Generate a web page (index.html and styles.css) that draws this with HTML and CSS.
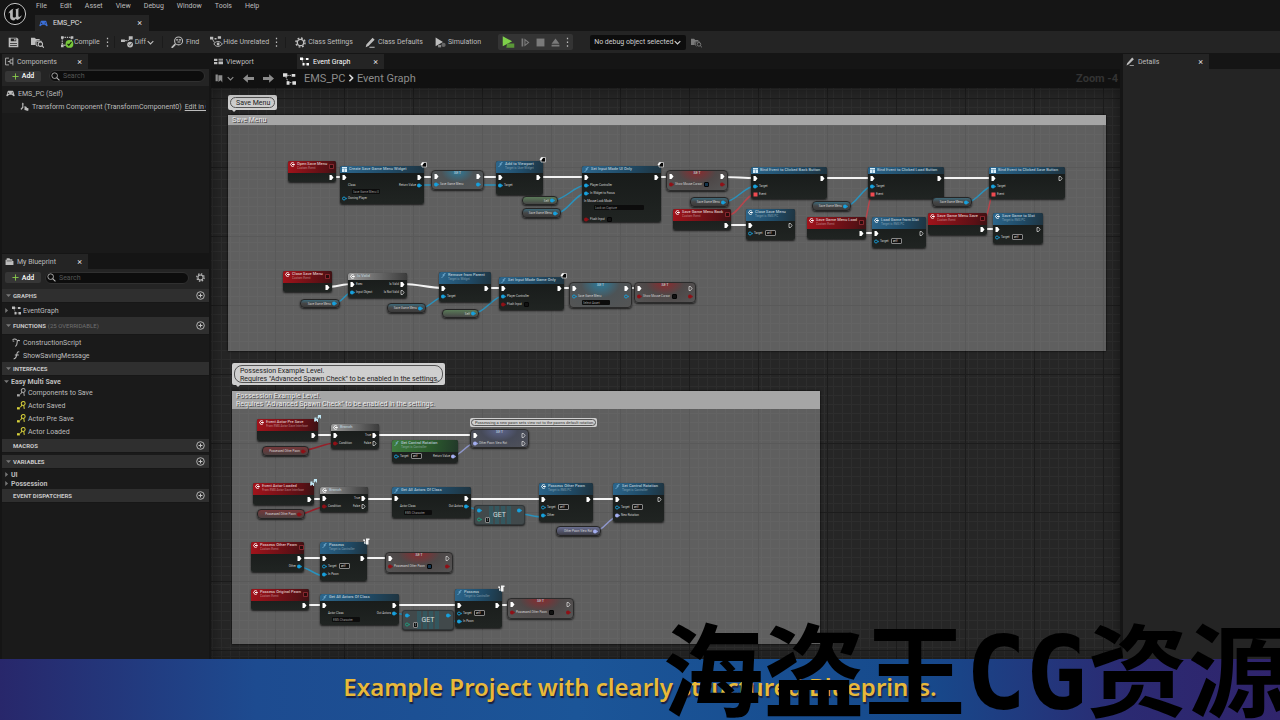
FILE: index.html
```
<!DOCTYPE html>
<html lang="en">
<head>
  <meta charset="UTF-8">
  <title>EMS_PC</title>
  <link rel="stylesheet" href="styles.css">
</head>
<body>

<svg class="sprite" aria-hidden="true">
  <symbol id="i-unreal" viewBox="0 0 24 24"><circle cx="12" cy="12" r="10.6" fill="#0c0c0c" stroke="#c4c4c4" stroke-width="1"/><path fill="#b4b4b4" d="M4.8 13.4C5.4 10 7.6 7.600 10.800 6.500 10 7.300 9.800 7.700 9.800 8.500v6c0 .8.7 1.100 1.300 1.100.7 0 1.300-.4 1.800-.9V8.600c0-.6-.2-.8-.8-1l4.300-1.700c-.8.7-1 1.200-1 2v6.200c0 .5.3.8.7.8.8 0 2-.9 2.900-1.900-.9 2.600-2.600 4.300-4.800 5.100l-1.300-1.300-1.800 1.600c-2.500-.1-4-1.500-4-3.500v-3.300c0-.5-.2-.8-.7-.8-.7 0-1.200.8-1.600 2.600z"/></symbol>
  <symbol id="i-pad" viewBox="0 0 16 12"><path fill="currentColor" fill-rule="evenodd" d="M4 1h8l1 1 2.500 8.500-2 .5-3-3h-5l-3 3-2-.5L3 2zM4 4v1H3v1h1v1h1V6h1V5H5V4zm7 0a1 1 0 1 0 .1 2A1 1 0 0 0 11 4z"/></symbol>
  <symbol id="i-save" viewBox="0 0 16 16"><path fill="currentColor" fill-rule="evenodd" d="M1 1h12l2 2v12H1zm3 1v4h8V2zm5 1h2v2H9zM3 9v1h10V9zm0 3v1h10v-1z"/></symbol>
  <symbol id="i-browse" viewBox="0 0 18 16"><path fill="currentColor" d="M0 2h5l2 2h5v2H8L6 8v4H0z"/><path fill="none" stroke="currentColor" stroke-width="1.500" d="M8 7h6v3M7 6v6l2 2"/><circle cx="13" cy="11" r="3" fill="#242424" stroke="currentColor" stroke-width="1.500"/><path stroke="currentColor" stroke-width="1.500" d="m15 13 3 3"/></symbol>
  <symbol id="i-compile" viewBox="0 0 20 18"><path fill="none" stroke="#c0c0c0" stroke-width="2" stroke-dasharray="2 1.500" d="M2 2h14v12H2z"/><path fill="#c0c0c0" d="M0 0h4v4H0zM15 0h4v4h-4zM0 13h4v4H0z"/><circle cx="13" cy="12" r="6" fill="#78c83c"/><path fill="none" stroke="#142008" stroke-width="1.800" d="m10 12 2 2 4-5"/></symbol>
  <symbol id="i-diff" viewBox="0 0 20 18"><path fill="currentColor" d="M0 5h6v4H0zM12 0h6v5h-6z"/><path stroke="currentColor" stroke-width="1.500" d="M6 7h4M11 7l3-3"/><circle cx="14" cy="13" r="4.500" fill="currentColor"/><path fill="none" stroke="#242424" stroke-width="1.300" d="m12 13 1.500 1.500L17 11"/></symbol>
  <symbol id="i-find" viewBox="0 0 18 16"><circle cx="10.500" cy="6.500" r="5.500" fill="none" stroke="currentColor" stroke-width="1.500"/><path stroke="currentColor" stroke-width="2.500" d="m6 11-5 5"/><path stroke="currentColor" stroke-width="1.500" d="M7 5h3M9 8h4M11 5h3"/></symbol>
  <symbol id="i-hide" viewBox="0 0 20 18"><path fill="currentColor" d="M0 1h5v4H0zM7 3h3v2H7zM12 0h5v4h-5z"/><path fill="none" stroke="currentColor" stroke-width="1.400" d="M4 5l3 5M6 12c3-5 9-5 13 0-4 5-10 5-13 0z"/><circle cx="12.500" cy="12" r="2.200" fill="currentColor"/></symbol>
  <symbol id="i-gear" viewBox="0 0 16 16"><circle cx="8" cy="8" r="4.600" fill="none" stroke="currentColor" stroke-width="1.800"/><circle cx="8" cy="8" r="6.600" fill="none" stroke="currentColor" stroke-width="2.200" stroke-dasharray="2.600 2.580"/></symbol>
  <symbol id="i-pencil" viewBox="0 0 16 16"><path fill="currentColor" d="m2 11 9-10 3 3-9 9-4 2zM7 14h7v1.500H6z"/></symbol>
  <symbol id="i-sim" viewBox="0 0 18 16"><path fill="currentColor" d="M1 0l12 7-12 7z"/><circle cx="14" cy="12" r="3.500" fill="#666"/><path fill="#888" d="M5 12h5v4H5z"/></symbol>
  <symbol id="i-play" viewBox="0 0 18 16"><path fill="#7ed04a" d="M1 0l13 7L1 14z"/><path fill="#5b9838" d="M7 10h10v6H6z"/></symbol>
  <symbol id="i-step" viewBox="0 0 16 16"><path fill="currentColor" d="M1 1h3v14H1zM6 1l9 7-9 7zM8 5v6l4-3z" fill-rule="evenodd"/></symbol>
  <symbol id="i-stop" viewBox="0 0 16 16"><path fill="currentColor" d="M1 1h14v14H1z"/></symbol>
  <symbol id="i-eject" viewBox="0 0 16 16"><path fill="currentColor" d="m8 1 7 9H1zM1 12h14v3H1z"/></symbol>
  <symbol id="i-dots" viewBox="0 0 4 16"><path fill="currentColor" d="M1 1h2v2.500H1zM1 7h2v2.500H1zM1 13h2v2.500H1z"/></symbol>
  <symbol id="i-down" viewBox="0 0 10 8"><path fill="none" stroke="currentColor" stroke-width="1.600" d="m1 2 4 4 4-4"/></symbol>
  <symbol id="i-comp" viewBox="0 0 16 16"><path fill="none" stroke="currentColor" stroke-width="1.500" d="M7 2H1v12h6M14 1v14M14 5H9v6h5M5 8h4"/></symbol>
  <symbol id="i-book" viewBox="0 0 16 14"><path fill="currentColor" d="M1 4h2V1h5l1 2h4v3h2v7H1z"/><path stroke="#242424" d="M3 6h9"/></symbol>
  <symbol id="i-search" viewBox="0 0 16 16"><circle cx="6.500" cy="6.500" r="5" fill="none" stroke="currentColor" stroke-width="1.500"/><path stroke="currentColor" stroke-width="1.800" d="m10 10 5 5"/></symbol>
  <symbol id="i-view" viewBox="0 0 16 12"><path fill="currentColor" d="M0 1h6v4H0zM8 1h8v2H8zM8 4h8v2H8zM0 7h6v4H0zM8 7h8v4H8z"/></symbol>
  <symbol id="i-graph" viewBox="0 0 18 16"><path fill="currentColor" d="M0 0h6v5H0zM12 1h5v4h-5zM5 11h4v5H5zM13 11h5v5h-5z"/><path fill="none" stroke="currentColor" stroke-width="1.200" stroke-dasharray="2 1" d="M6 3h6M4 5l3 7M9 13h4"/></symbol>
  <symbol id="i-flag" viewBox="0 0 16 16"><path fill="currentColor" d="M1 1h4v12H1zM6 2h7v13l-3-4-4 3z"/></symbol>
  <symbol id="i-left" viewBox="0 0 18 14"><path fill="currentColor" d="M0 7l8-7v4.500h10v5H8V14z"/></symbol>
  <symbol id="i-right" viewBox="0 0 18 14"><path fill="currentColor" d="m18 7-8-7v4.500H0v5h10V14z"/></symbol>
  <symbol id="i-axis" viewBox="0 0 16 16"><path fill="currentColor" d="M5 1l2 3H6v6l-4 4-1-2 3-3V4H3zM8 7l4 2v6l-4-1zM12 10l3 1v4l-3 1z"/></symbol>
  <symbol id="i-add" viewBox="0 0 16 16"><circle cx="8" cy="8" r="6.800" fill="none" stroke="currentColor" stroke-width="1.500"/><path stroke="currentColor" stroke-width="1.700" d="M8 4.500v7M4.500 8h7"/></symbol>
  <symbol id="i-plus" viewBox="0 0 16 16"><path stroke="#8ccf4d" stroke-width="2" d="M8 1v14M1 8h14"/></symbol>
  <symbol id="i-open" viewBox="0 0 8 8"><path fill="currentColor" d="M0 2h8L4 6.500z"/></symbol>
  <symbol id="i-shut" viewBox="0 0 8 8"><path fill="currentColor" d="M2 0v8l4.500-4z"/></symbol>
  <symbol id="i-func" viewBox="0 0 16 16"><path fill="none" stroke="currentColor" stroke-width="1.800" d="M13 2c-3-2-4 1-4.500 4S7 14 3 14M5 7h7"/></symbol>
  <symbol id="i-cons" viewBox="0 0 16 16"><path fill="none" stroke="currentColor" stroke-width="1.800" d="M14 5c-4-2-5 0-5 4s-1 5-3 6M1 3c3-2 5-2 8 1M1 5l3 1"/></symbol>
  <symbol id="i-iface" viewBox="0 0 16 16"><circle cx="11" cy="4.500" r="3.500" fill="none" stroke="currentColor" stroke-width="1.800"/><path stroke="currentColor" stroke-width="1.800" d="m9 7-3 4M12 8l1 6"/><path fill="currentColor" d="M0 11h5v4H0z"/></symbol>
  <symbol id="i-pin-exec" viewBox="0 0 10 10"><path fill="#fff" d="M1 0h4l4 5-4 5H1z"/></symbol>
  <symbol id="i-pin-execo" viewBox="0 0 10 10"><path fill="none" stroke="#ddd" stroke-width="1.500" d="M2 1h3l3 4-3 4H2z"/></symbol>
  <symbol id="i-pin-dot" viewBox="0 0 10 10"><circle cx="4" cy="5" r="4" fill="currentColor"/><path fill="currentColor" d="m8 3 2 2-2 2z"/></symbol>
  <symbol id="i-pin-ring" viewBox="0 0 10 10"><circle cx="4" cy="5" r="3" fill="none" stroke="currentColor" stroke-width="1.800"/><path fill="currentColor" d="m8 3 2 2-2 2z"/></symbol>
  <symbol id="i-pin-box" viewBox="0 0 10 10"><path fill="currentColor" d="M1 1h8v8H1z"/></symbol>
  <symbol id="i-pin-boxo" viewBox="0 0 10 10"><path fill="#2a0c0c" stroke="currentColor" stroke-width="1.500" d="M1 1h8v8H1z"/></symbol>
  <symbol id="i-event" viewBox="0 0 10 10"><path fill="none" stroke="#fff" stroke-width="1.800" d="M7 1 5 0 1 5l4 5 2-1"/><path fill="#fff" d="M4 4h3V2l3 3-3 3V6H4z"/></symbol>
  <symbol id="i-f" viewBox="0 0 10 10"><path fill="none" stroke="#7fb8dc" stroke-width="1.500" d="M9 1C6 0 6 2 5 5S3 9 1 9M3 4h5"/></symbol>
  <symbol id="i-square" viewBox="0 0 10 10"><path fill="#d8ecf8" d="M0 0h10v10H0z"/><path stroke="#4c88ac" d="M0 3h10M5 3v7"/></symbol>
  <symbol id="i-screen" viewBox="0 0 14 14"><path fill="#050505" stroke="#ddd" stroke-width="1.500" d="M4 1h9v9H4z"/><path fill="#fff" d="M5 1h4L4 7 1 5z"/></symbol>
  <symbol id="i-server" viewBox="0 0 14 14"><path fill="#f4f4f4" d="M6 1h7v3h-2v9H6zM0 3h4v3H1zM2 7h3v5H3z"/></symbol>
  <symbol id="i-link" viewBox="0 0 14 14"><path fill="#bfe6f4" d="M8 0h6v7h-2V4L9 7H7zM1 5h4v3h3v6H6v-3L3 13H0z"/></symbol>
</svg>

<div class="app">
  <header class="titlebar">
    <svg class="logo"><use href="#i-unreal"/></svg>
    <div class="titles">
      <nav class="menu">
        <button>File</button><button>Edit</button><button>Asset</button><button>View</button><button>Debug</button><button>Window</button><button>Tools</button><button>Help</button>
      </nav>
      <div class="doc-tab"><svg class="icon small pad"><use href="#i-pad"/></svg><span>EMS_PC•</span><button class="close" aria-label="Close EMS_PC">×</button></div>
    </div>
  </header>

  <div class="toolbar">
    <button class="t-save" aria-label="Save"><svg class="icon"><use href="#i-save"/></svg></button>
    <button class="t-browse" aria-label="Browse"><svg class="icon wide"><use href="#i-browse"/></svg></button>
    <button class="t-compile"><svg class="icon wide"><use href="#i-compile"/></svg>Compile</button>
    <button class="t-more" aria-label="Compile options"><svg class="icon dots"><use href="#i-dots"/></svg></button>
    <button class="t-diff sep"><svg class="icon wide"><use href="#i-diff"/></svg>Diff<svg class="icon tiny"><use href="#i-down"/></svg></button>
    <button class="t-find sep"><svg class="icon wide"><use href="#i-find"/></svg>Find</button>
    <button class="t-hide"><svg class="icon wide"><use href="#i-hide"/></svg>Hide Unrelated</button>
    <button class="t-more" aria-label="Hide options"><svg class="icon dots"><use href="#i-dots"/></svg></button>
    <button class="t-settings sep"><svg class="icon"><use href="#i-gear"/></svg>Class Settings</button>
    <button class="t-defaults"><svg class="icon"><use href="#i-pencil"/></svg>Class Defaults</button>
    <button class="t-sim"><svg class="icon"><use href="#i-sim"/></svg>Simulation</button>
    <div class="play">
      <button aria-label="Play"><svg class="icon wide"><use href="#i-play"/></svg></button>
      <button class="off" aria-label="Step"><svg class="icon small"><use href="#i-step"/></svg></button>
      <button class="off" aria-label="Stop"><svg class="icon small"><use href="#i-stop"/></svg></button>
      <button class="off" aria-label="Eject"><svg class="icon small"><use href="#i-eject"/></svg></button>
      <button aria-label="Play options"><svg class="icon dots"><use href="#i-dots"/></svg></button>
    </div>
    <div class="debug">
      <select aria-label="Debug object"><option>No debug object selected</option></select>
      <svg class="icon tiny"><use href="#i-down"/></svg>
    </div>
    <button class="off" aria-label="Locate debug object"><svg class="icon"><use href="#i-browse"/></svg></button>
  </div>

  <main class="workspace">
    <aside class="left">
      <section class="components">
        <div class="tabs"><div class="tab"><svg class="icon small"><use href="#i-comp"/></svg>Components<button class="close" aria-label="Close Components">×</button></div></div>
        <div class="tools">
          <button class="add"><svg class="icon tiny"><use href="#i-plus"/></svg>Add</button>
          <label class="search"><svg class="icon small"><use href="#i-search"/></svg><input type="text" placeholder="Search" aria-label="Search components"></label>
        </div>
        <div class="tree">
          <div class="tree-row"><svg class="icon small"><use href="#i-pad"/></svg>EMS_PC (Self)</div>
          <div class="tree-row child"><svg class="icon small"><use href="#i-axis"/></svg>Transform Component (TransformComponent0)<a href="#">Edit in C++</a></div>
        </div>
      </section>

      <section class="blueprint">
        <div class="tabs"><div class="tab"><svg class="icon small"><use href="#i-book"/></svg>My Blueprint<button class="close" aria-label="Close My Blueprint">×</button></div></div>
        <div class="tools">
          <button class="add"><svg class="icon tiny"><use href="#i-plus"/></svg>Add</button>
          <label class="search"><svg class="icon small"><use href="#i-search"/></svg><input type="text" placeholder="Search" aria-label="Search blueprint"></label>
          <button class="gear" aria-label="View options"><svg class="icon small"><use href="#i-gear"/></svg></button>
        </div>
        <div class="list">
          <h2><svg class="arrow"><use href="#i-open"/></svg>GRAPHS<button aria-label="Add graph"><svg class="icon small"><use href="#i-add"/></svg></button></h2>
          <div class="item graph"><svg class="arrow"><use href="#i-shut"/></svg><svg class="icon small"><use href="#i-graph"/></svg>EventGraph</div>
          <h2 class="tall"><svg class="arrow"><use href="#i-open"/></svg>FUNCTIONS <small>(25 OVERRIDABLE)</small><button aria-label="Add function"><svg class="icon small"><use href="#i-add"/></svg></button></h2>
          <div class="item fn first"><svg class="icon small"><use href="#i-cons"/></svg>ConstructionScript</div>
          <div class="item fn"><svg class="icon small"><use href="#i-func"/></svg>ShowSavingMessage</div>
          <h2><svg class="arrow"><use href="#i-open"/></svg>INTERFACES</h2>
          <div class="group"><svg class="arrow"><use href="#i-open"/></svg>Easy Multi Save</div>
          <div class="item iface plain"><svg class="icon small"><use href="#i-iface"/></svg>Components to Save</div>
          <div class="item iface"><svg class="icon small"><use href="#i-iface"/></svg>Actor Saved</div>
          <div class="item iface"><svg class="icon small"><use href="#i-iface"/></svg>Actor Pre Save</div>
          <div class="item iface"><svg class="icon small"><use href="#i-iface"/></svg>Actor Loaded</div>
          <h2 class="bare">MACROS<button aria-label="Add macro"><svg class="icon small"><use href="#i-add"/></svg></button></h2>
          <h2><svg class="arrow"><use href="#i-open"/></svg>VARIABLES<button aria-label="Add variable"><svg class="icon small"><use href="#i-add"/></svg></button></h2>
          <div class="group"><svg class="arrow"><use href="#i-shut"/></svg>UI</div>
          <div class="group"><svg class="arrow"><use href="#i-shut"/></svg>Possession</div>
          <h2 class="bare">EVENT DISPATCHERS<button aria-label="Add dispatcher"><svg class="icon small"><use href="#i-add"/></svg></button></h2>
        </div>
      </section>
    </aside>

    <section class="center">
      <div class="tabs">
        <div class="tab idle"><svg class="icon small"><use href="#i-view"/></svg>Viewport</div>
        <div class="tab active"><svg class="icon small"><use href="#i-graph"/></svg>Event Graph<button class="close" aria-label="Close Event Graph">×</button></div>
      </div>
      <div class="crumbs">
        <button aria-label="Bookmarks"><svg class="icon small"><use href="#i-flag"/></svg><svg class="icon tiny"><use href="#i-down"/></svg></button>
        <button class="nav" aria-label="Back"><svg class="icon"><use href="#i-left"/></svg></button>
        <button class="nav" aria-label="Forward"><svg class="icon"><use href="#i-right"/></svg></button>
        <svg class="icon wide"><use href="#i-graph"/></svg>
        <span class="path">EMS_PC <svg class="chevron" viewBox="0 0 6 10"><path d="m1 1 4 4-4 4"/></svg> Event Graph</span>
        <span class="zoom">Zoom -4</span>
      </div>
      <div class="canvas" id="canvas"></div>
    </section>

    <aside class="details">
      <div class="tabs"><div class="tab"><svg class="icon small"><use href="#i-pencil"/></svg>Details<button class="close" aria-label="Close Details">×</button></div></div>
      <div class="details-body"></div>
    </aside>
  </main>

  <footer class="banner">Example Project with clearly structured Blueprints.</footer>
  <div class="watermark" lang="zh">海盗王CG资源</div>
</div>

<script src="script.js"></script>
</body>
</html>
```
FILE: styles.css
```
* {
  box-sizing: border-box;
}

body {
  margin: 0;
  background: #151515;
  color: #bdbdbd;
  font-family: Roboto, "Liberation Sans", sans-serif;
  font-size: 7px;
  line-height: 10px;
}

button {
  display: flex;
  align-items: center;
  gap: 3px;
  padding: 0;
  border: none;
  background: none;
  color: inherit;
  font: inherit;
  cursor: pointer;
}

.sprite {
  display: none;
}

.app {
  position: relative;
  display: flex;
  flex-direction: column;
  height: 100vh;
  overflow: hidden;
}

.icon {
  width: 11px;
  height: 11px;
  flex: none;
}

.icon.wide { width: 13px; height: 12px; }
.icon.small { width: 9px; height: 9px; }
.icon.tiny { width: 7px; height: 7px; }
.icon.dots { width: 3px; height: 10px; }

.arrow {
  width: 5px;
  height: 5px;
  flex: none;
  color: #777;
}

.close {
  margin-left: auto;
  color: #ddd;
  font-size: 9px;
}

/* title bar */

.titlebar {
  display: flex;
  height: 31px;
  flex: none;
  padding-left: 3px;
}

.logo {
  width: 24px;
  height: 24px;
  margin-top: 2px;
}

.titles {
  margin-left: 8px;
}

.menu {
  display: flex;
  gap: 13px;
  height: 12px;
  margin-bottom: 3px;
  padding-left: 1px;
}

.doc-tab {
  display: flex;
  align-items: center;
  gap: 5px;
  width: 114px;
  height: 16px;
  padding: 0 7px 0 4px;
  background: #242424;
  color: #e0e0e0;
}

.pad {
  color: #3b6fd8;
}

/* toolbar */

.toolbar {
  display: flex;
  align-items: center;
  height: 22px;
  flex: none;
  padding-left: 8px;
  background: #242424;
}

.sep {
  border-left: 1px solid #1b1b1b;
}

.t-browse { margin-left: 12px; }
.t-compile { margin-left: 17px; gap: 0; }
.t-more { margin-left: 6px; }
.t-diff { margin-left: 5px; padding-left: 6px; gap: 1px; }
.t-find { margin-left: 8px; padding-left: 8px; gap: 2px; }
.t-hide { margin-left: 11px; gap: 0; }
.t-settings { margin-left: 7px; padding-left: 9px; gap: 2px; }
.t-defaults { margin-left: 12px; gap: 2px; }
.t-sim { margin-left: 12px; gap: 2px; }

.play {
  display: flex;
  align-items: center;
  gap: 6px;
  height: 16px;
  margin: 0 17px;
  padding: 0 4px;
  border-radius: 2px;
  background: #343434;
}

.off {
  color: #7a7a7a;
}

.debug {
  display: flex;
  align-items: center;
  width: 96px;
  height: 15px;
  margin-right: 5px;
  padding: 0 5px 0 4px;
  border-radius: 2px;
  background: #0d0d0d;
  color: #d0d0d0;
}

.debug select {
  flex: 1;
  min-width: 0;
  padding: 0;
  border: none;
  background: none;
  color: inherit;
  font: inherit;
  appearance: none;
}

/* panels */

.workspace {
  display: flex;
  flex: 1;
  min-height: 0;
}

.left {
  display: flex;
  flex-direction: column;
  width: 209px;
  flex: none;
  padding-left: 2px;
}

.tabs {
  display: flex;
  align-items: flex-end;
  height: 16px;
  flex: none;
  background: #151515;
}

.tab {
  display: flex;
  align-items: center;
  gap: 3px;
  width: 86px;
  height: 15px;
  padding: 0 6px 0 3px;
  background: #242424;
}

.tools {
  display: flex;
  align-items: center;
  gap: 8px;
  height: 17px;
  padding: 0 4px 3px 3px;
  background: #242424;
}

.add {
  justify-content: center;
  width: 36px;
  height: 11px;
  border-radius: 2px;
  background: #363636;
  color: #fff;
  font-weight: 500;
}

.search {
  display: flex;
  align-items: center;
  flex: 1;
  gap: 3px;
  height: 12px;
  padding: 0 1px;
  border: 1px solid #303030;
  border-radius: 6px;
  background: #0d0d0d;
}

.search input {
  flex: 1;
  min-width: 0;
  padding: 0;
  border: none;
  outline: none;
  background: none;
  color: #ccc;
  font: inherit;
}

.search input::placeholder {
  color: #555;
}

.components {
  height: 200px;
  flex: none;
  background: #1a1a1a;
}

.tree-row {
  display: flex;
  align-items: center;
  gap: 3px;
  height: 13px;
  padding-left: 4px;
  white-space: nowrap;
  overflow: hidden;
}

.tree {
  padding: 1px 3px 0 0;
}

.tree-row.child {
  padding-left: 18px;
  background: #1e1e1e;
}

.tree-row a {
  color: inherit;
}

.blueprint {
  flex: 1;
  background: #1a1a1a;
}

.blueprint .tools {
  height: 20px;
  gap: 4px;
}

.gear {
  margin-left: 3px;
}

.list h2 {
  display: flex;
  align-items: center;
  height: 14px;
  margin: 0 0 1px;
  padding: 0 4px;
  gap: 2px;
  border-bottom: 1px solid #171717;
  background: #2f2f2f;
  color: #c8c8c8;
  font-size: 6px;
  font-weight: 700;
}

.list h2 small {
  color: #707070;
  font-size: 6px;
  font-weight: 400;
}

.list h2 button {
  margin-left: auto;
}

.list h2.tall { height: 18px; }

.list h2.bare {
  margin: 1px 0 2px;
  padding-left: 11px;
}

.item {
  display: flex;
  align-items: center;
  height: 13px;
  gap: 2px;
  padding-left: 2px;
}

.item.fn { padding-left: 10px; }
.item.iface { padding-left: 15px; }
.item.iface .icon { color: #d8d23c; }
.item.iface.plain .icon { color: #aaa; }
.item.graph .arrow { margin-right: 1px; }

.group {
  display: flex;
  align-items: center;
  gap: 2px;
  height: 9px;
  padding-left: 2px;
  font-weight: 700;
}

.center {
  display: flex;
  flex-direction: column;
  flex: 1;
  min-width: 0;
  margin: 0 3px 0 2px;
}

.tab.idle {
  background: none;
}

.tab.active {
  width: 87px;
  gap: 4px;
  color: #fff;
}

.crumbs {
  display: flex;
  align-items: center;
  gap: 9px;
  height: 19px;
  flex: none;
  padding: 0 2px 0 4px;
  background: #111;
  color: #8c8c8c;
}

.crumbs > .icon {
  color: #ddd;
}

.path {
  margin-left: -1px;
  font-size: 11px;
}

.chevron {
  width: 6px;
  height: 8px;
  fill: none;
  stroke: #ddd;
  stroke-width: 2;
}

.zoom {
  margin-left: auto;
  color: #333;
  font-size: 11px;
  font-weight: 700;
}

.details {
  display: flex;
  flex-direction: column;
  width: 157px;
  flex: none;
}

.details-body {
  flex: 1;
  background: #242424;
}

/* graph */

.canvas {
  position: relative;
  flex: 1;
  overflow: hidden;
  background-color: #262626;
  background-image:
    linear-gradient(90deg, #1c1c1c 1px, transparent 1px),
    linear-gradient(#1c1c1c 1px, transparent 1px),
    linear-gradient(90deg, #2d2d2d 1px, transparent 1px),
    linear-gradient(#2d2d2d 1px, transparent 1px);
  background-size: 69px 69px, 69px 69px, 9px 9px, 9px 9px;
  background-position: 64px 10px;
}

/* darker rim over the whole graph */
.canvas::after {
  content: "";
  position: absolute;
  inset: 0;
  box-shadow: inset 0 0 16px #0007;
  pointer-events: none;
}

.canvas > * {
  position: absolute;
}

.wires {
  inset: 0;
  width: 100%;
  height: 100%;
  fill: none;
}

.comment {
  background: rgba(190, 190, 190, 0.38);
  box-shadow: 0 0 2px #000;
}

.comment-head {
  padding: 1px 4px;
  background: #a6a6a6;
  color: #e8e8e8;
  font-size: 7px;
  line-height: 8px;
  text-shadow: 1px 1px 0 #444;
  white-space: pre;
}

.bubble {
  padding: 2px;
  border-radius: 2px;
  background: #cfcfcf;
  color: #222;
}

.bubble p {
  margin: 0;
  height: 100%;
  padding: 1px 5px;
  border: 1px solid #555;
  border-radius: 8px;
  font-size: 7px;
  line-height: 8px;
  white-space: pre;
}

.bubble::after {
  content: "";
  position: absolute;
  left: 4px;
  top: 100%;
  border: 2px solid transparent;
  border-top-color: #cfcfcf;
}

.bubble.mini { padding: 1px; }
.bubble.mini::after { display: none; }

.bubble.mini p {
  padding: 0 3px;
  font-size: 4px;
  line-height: 5px;
  color: #333;
}

.node {
  border-radius: 2px;
  background: linear-gradient(#171a19, #202422);
  box-shadow: 0 1px 2px #000b;
  color: #d0d0d0;
  font-size: 3px;
  line-height: 4px;
  white-space: nowrap;
}

.head {
  display: flex;
  gap: 2px;
  height: 12px;
  padding: 1px 2px;
  border-radius: 2px 2px 0 0;
  color: #b4c6d0;
  font-size: 4px;
  font-weight: 500;
}

.head svg {
  width: 5px;
  height: 5px;
  flex: none;
}

.head small {
  display: block;
  opacity: 0.5;
  font-size: 3px;
}

.head .mark {
  margin: 2px 0 0 auto;
  color: #a03038;
}

.one .head { height: 7px; }
.event .head { background: linear-gradient(100deg, #a3131b, #5a1015 80%, #3a1214); color: #dcc0c0; }
.fn .head { background: linear-gradient(100deg, #2c668c, #1f4a66 60%, #1f3440); }
.pure .head { background: linear-gradient(100deg, #3f7d40, #2b5a2d 60%, #22382a); }
.macro .head { background: linear-gradient(90deg, #9a9a9a, #6a6a6a 50%, #3c3c3c); }

.row {
  display: flex;
  align-items: center;
  gap: 1px;
  height: 8px;
  padding: 0 2px;
}

.row.short { height: 5px; padding-left: 10px; }

.row svg {
  width: 5px;
  height: 5px;
  flex: none;
}

.row .gap {
  flex: 1;
}

.dot-obj { color: #17a0dc; }
.dot-bool { color: #8f1016; }
.dot-del { color: #ef4a50; }
.dot-rot { color: #a3aef0; }
.dot-int { color: #1fa080; }

.row input,
.row select {
  margin: 0 0 0 1px;
  padding: 0 1px;
  border: 1px solid #888;
  border-radius: 1px;
  background: #111;
  color: #ddd;
  font: inherit;
  appearance: none;
}

.row input[type="text"] {
  width: 11px;
  height: 6px;
}

.row input[type="checkbox"] {
  width: 5px;
  height: 5px;
  border-color: #050505;
}

.row input[type="checkbox"]:checked {
  background: #14344c;
}

.row select {
  width: 28px;
  height: 5px;
  border: none;
  background: #0c0c0c;
  color: #999;
}

.row select.long {
  width: 50px;
}

.set {
  border: 1px solid #2b2b2b;
  border-radius: 4px;
  background: linear-gradient(#484c4e, #5a5a5a);
}

.set.obj { background: radial-gradient(ellipse at 50% 0, #2d7c9c, #4d5356 45%, #555); }
.set.bool { background: radial-gradient(ellipse at 50% 0, #8c2a2e, #4e4848 45%, #555); }
.set.rot { background: radial-gradient(ellipse at 50% 0, #5e6690, #464a58 45%, #50525a); }

.set .head {
  justify-content: center;
  height: 1px;
  padding: 0;
}

.pill {
  display: flex;
  align-items: center;
  border: 1px solid #252525;
  border-radius: 4px;
  background: linear-gradient(#3c6878, #464646 50%, #3a3a3a);
}

.pill .row { flex: 1; }
.pill.green { background: linear-gradient(#5a7a58, #464646); }
.pill.bool { background: linear-gradient(#75383a, #4a4040); }
.pill.rot { background: linear-gradient(#6a6e90, #3e3e48); }

.get {
  border: 1px solid #303638;
  border-radius: 3px;
  background: repeating-linear-gradient(90deg, #1f6c7c66 0 4px, transparent 4px 6px) 50% / 22px 100% no-repeat, #41494b;
}

.get .row { height: 9px; }

.get strong {
  position: absolute;
  inset: 5px 0 0;
  color: #d4dcdc;
  font-size: 7px;
  font-weight: 400;
  line-height: 8px;
  text-align: center;
}

.get input[type="text"] {
  width: 5px;
}

.badge {
  position: absolute;
  right: -3px;
  top: -4px;
  width: 7px;
  height: 7px;
}

/* footer */

.banner {
  height: 61px;
  flex: none;
  background: linear-gradient(90deg, #28276b, #1d4b90 20%, #1b5598 45%, #164a8c 72%, #2b2a72 88%, #30246c);
  color: #e8b93a;
  font-family: "Noto Sans", "Open Sans", sans-serif;
  font-size: 24px;
  font-weight: 600;
  line-height: 56px;
  text-align: center;
  text-shadow: 1px 2px 1px #1a2040;
}

.watermark {
  position: absolute;
  right: -9px;
  bottom: 0;
  color: #000;
  font-family: "DejaVu Sans Mono", "Noto Sans CJK SC", sans-serif;
  font-size: 101px;
  font-weight: 700;
  line-height: 92px;
  white-space: nowrap;
  pointer-events: none;
}
```
FILE: script.js
```
const canvas = document.getElementById('canvas');

// graph position of the canvas corner
const view = { x: 211, y: 88 };

// row: [input pin, label, output label, output pin, control]
const EXEC = ['exec', '', '', 'exec'];
const END = ['exec', '', '', 'execo'];
const OUT = ['', '', '', 'exec'];
const SELF = ['objo', 'Target', '', '', 'self'];
const SGM = ['', '', 'Save Game Menu', 'obj'];
const BIND = [EXEC, ['obj', 'Target'], ['del', 'Event']];
const ACTORS = [EXEC, ['', '', 'Out Actors', 'obj', '', 'Actor Class'], ['', '', '', '', 'EMS Character']];

const comments = [
  [228, 115, 878, 236, 'Save Menu'],
  [232, 391, 588, 253, 'Possession Example Level.\nRequires "Advanced Spawn Check" to be enabled in the settings.']
];

const bubbles = [
  [228, 95, 49, 15, 'Save Menu'],
  [232, 363, 213, 22, 'Possession Example Level.\nRequires "Advanced Spawn Check" to be enabled in the settings.'],
  [470, 418, 127, 9, 'Possessing a new pawn sets view rot to the pawns default rotation.', 'mini']
];

// x, y, width, height, kind, title, subtitle, rows, badge
const nodes = [
  [288, 161, 48, 21, 'event', 'Open Save Menu', 'Custom Event', [OUT]],
  [340, 166, 84, 38, 'fn one sq', 'Create Save Game Menu Widget', '', [EXEC, ['', '', 'Return Value', 'obj', '', 'Class'], ['', '', '', '', 'Save Game Menu UI'], ['objo', 'Owning Player']], 'screen'],
  [431, 170, 53, 20, 'set obj', 'SET', '', [EXEC, ['obj', 'Save Game Menu', '', 'obj']]],
  [496, 161, 47, 34, 'fn', 'Add to Viewport', 'Target is User Widget', [EXEC, ['obj', 'Target']], 'screen'],
  [522, 196, 36, 9, 'pill green', '', '', [['', '', 'Self', 'obj']]],
  [522, 208, 39, 10, 'pill', '', '', [SGM]],
  [582, 166, 79, 56, 'fn one', 'Set Input Mode UI Only', '', [EXEC, ['obj', 'Player Controller'], ['obj', 'In Widget to Focus'], ['', 'In Mouse Lock Mode'], ['', '', '', '', 'Lock on Capture'], ['', ''], ['bool', 'Flush Input', '', '', 'off']], 'screen'],
  [666, 170, 62, 21, 'set bool', 'SET', '', [EXEC, ['bool', 'Show Mouse Cursor', '', 'bool', 'on']]],
  [751, 167, 76, 32, 'fn one sq', 'Bind Event to Clicked Back Button', '', BIND],
  [868, 167, 76, 32, 'fn one sq', 'Bind Event to Clicked Load Button', '', BIND],
  [989, 167, 76, 32, 'fn one sq', 'Bind Event to Clicked Save Button', '', [END, BIND[1], BIND[2]]],
  [690, 197, 39, 10, 'pill', '', '', [SGM]],
  [812, 201, 39, 10, 'pill', '', '', [SGM]],
  [932, 197, 40, 10, 'pill', '', '', [SGM]],
  [673, 209, 58, 21, 'event', 'Save Game Menu Back', 'Custom Event', [OUT]],
  [746, 209, 49, 31, 'fn call', 'Close Save Menu', 'Target is EMS PC', [END, SELF]],
  [807, 217, 59, 22, 'event', 'Save Game Menu Load', 'Custom Event', [OUT]],
  [872, 217, 54, 31, 'fn call', 'Load Game from Slot', 'Target is EMS PC', [END, SELF]],
  [928, 213, 59, 22, 'event', 'Save Game Menu Save', 'Custom Event', [OUT]],
  [993, 213, 50, 31, 'fn call', 'Save Game to Slot', 'Target is EMS PC', [END, SELF]],

  [283, 271, 49, 21, 'event', 'Close Save Menu', 'Custom Event', [OUT]],
  [300, 299, 40, 9, 'pill', '', '', [SGM]],
  [348, 273, 59, 25, 'macro one', 'Is Valid', '', [['exec', 'Exec', 'Is Valid', 'exec'], ['obj', 'Input Object', 'Is Not Valid', 'execo']]],
  [387, 303, 39, 10, 'pill', '', '', [SGM]],
  [439, 272, 52, 30, 'fn', 'Remove from Parent', 'Target is Widget', [EXEC, ['obj', 'Target']]],
  [442, 309, 37, 9, 'pill green', '', '', [['', '', 'Self', 'obj']]],
  [499, 277, 65, 33, 'fn one', 'Set Input Mode Game Only', '', [EXEC, ['obj', 'Player Controller'], ['bool', 'Flush Input', '', '', 'off']], 'screen'],
  [569, 282, 63, 26, 'set obj', 'SET', '', [EXEC, ['objo', 'Save Game Menu', '', 'objo'], ['', '', '', '', 'Select Asset']]],
  [634, 282, 62, 21, 'set bool', 'SET', '', [END, ['bool', 'Show Mouse Cursor', '', 'bool', 'off']]],

  [257, 419, 61, 22, 'event', 'Event Actor Pre Save', 'From EMS Actor Save Interface', [OUT], 'link'],
  [262, 446, 47, 10, 'pill bool', '', '', [['', '', 'Possessed Other Pawn', 'bool']]],
  [331, 424, 48, 25, 'macro one', 'Branch', '', [['exec', '', 'True', 'exec'], ['bool', 'Condition', 'False', 'execo']]],
  [392, 440, 66, 23, 'pure', 'Get Control Rotation', 'Target is Controller', [['objo', 'Target', 'Return Value', 'rot', 'self']]],
  [470, 429, 59, 19, 'set rot', 'SET', '', [END, ['rot', 'Other Pawn View Rot', '', 'execo']]],

  [253, 483, 61, 22, 'event', 'Event Actor Loaded', 'From EMS Actor Save Interface', [OUT], 'link'],
  [257, 509, 48, 10, 'pill bool', '', '', [['', '', 'Possessed Other Pawn', 'bool']]],
  [320, 487, 48, 25, 'macro one', 'Branch', '', [['exec', '', 'True', 'exec'], ['bool', 'Condition', 'False', 'execo']]],
  [392, 487, 79, 31, 'fn one', 'Get All Actors Of Class', '', ACTORS],
  [474, 505, 51, 20, 'get', '', '', [['obj', '', '', 'obj'], ['into', '', '', '', '0']]],
  [539, 483, 54, 39, 'fn call', 'Possess Other Pawn', 'Target is EMS PC', [EXEC, SELF, ['obj', 'Other']]],
  [556, 526, 45, 10, 'pill rot', '', '', [['', '', 'Other Pawn View Rot', 'rot']]],
  [613, 483, 51, 39, 'fn', 'Set Control Rotation', 'Target is Controller', [END, SELF, ['rot', 'New Rotation']]],

  [251, 542, 53, 30, 'event', 'Possess Other Pawn', 'Custom Event', [OUT, ['', '', 'Other', 'obj']]],
  [320, 542, 47, 39, 'fn', 'Possess', 'Target is Controller', [EXEC, SELF, ['obj', 'In Pawn']], 'server'],
  [385, 552, 68, 21, 'set bool', 'SET', '', [END, ['bool', 'Possessed Other Pawn', '', 'bool', 'on']]],

  [251, 589, 58, 21, 'event', 'Possess Original Pawn', 'Custom Event', [OUT]],
  [320, 594, 79, 31, 'fn one', 'Get All Actors Of Class', '', ACTORS],
  [402, 610, 52, 20, 'get', '', '', [['obj', '', '', 'obj'], ['into', '', '', '', '0']]],
  [455, 589, 47, 39, 'fn', 'Possess', 'Target is Controller', [EXEC, SELF, ['obj', 'In Pawn']], 'server'],
  [507, 598, 67, 21, 'set bool', 'SET', '', [END, ['bool', 'Possessed Other Pawn', '', 'bool', 'off']]]
];

const colors = { exec: '#f4f4f4', obj: '#2a92bd', bool: '#96202a', del: '#b8454c', rot: '#8f97cc' };

// kind, x1, y1, x2, y2
const wires = [
  ['exec', 331, 177, 344, 177], ['exec', 420, 177, 436, 177], ['exec', 480, 177, 500, 177],
  ['exec', 540, 177, 586, 177], ['exec', 658, 177, 670, 177], ['exec', 723, 177, 755, 178],
  ['exec', 823, 178, 872, 178], ['exec', 940, 178, 993, 178],
  ['exec', 727, 225, 750, 225], ['exec', 862, 233, 876, 233], ['exec', 983, 229, 997, 229],
  ['obj', 419, 185, 436, 185], ['obj', 480, 185, 500, 185],
  ['obj', 554, 200, 586, 185], ['obj', 557, 213, 586, 193],
  ['obj', 725, 202, 755, 186], ['obj', 847, 206, 872, 186], ['obj', 968, 202, 993, 186],
  ['del', 729, 215, 755, 194], ['del', 864, 223, 872, 194], ['del', 985, 219, 993, 194],
  ['exec', 327, 287, 352, 284], ['exec', 404, 284, 443, 288], ['exec', 487, 288, 503, 288],
  ['exec', 560, 288, 574, 288], ['exec', 628, 288, 639, 288],
  ['obj', 336, 303, 352, 292], ['obj', 422, 308, 443, 297], ['obj', 475, 313, 503, 296],
  ['exec', 313, 435, 335, 435], ['exec', 374, 435, 475, 435],
  ['bool', 304, 450, 335, 443], ['rot', 453, 456, 475, 443],
  ['exec', 309, 499, 324, 499], ['exec', 364, 499, 396, 499], ['exec', 467, 499, 543, 499], ['exec', 589, 499, 617, 499],
  ['bool', 300, 514, 324, 507], ['obj', 467, 507, 479, 510], ['obj', 519, 514, 543, 517], ['rot', 596, 531, 617, 517],
  ['exec', 300, 558, 324, 558], ['exec', 363, 558, 390, 558], ['obj', 300, 567, 324, 576],
  ['exec', 305, 605, 324, 605], ['exec', 394, 605, 459, 605], ['exec', 498, 605, 512, 605],
  ['obj', 394, 613, 407, 615], ['obj', 449, 620, 459, 622]
];

function place(cls, x, y, w, h) {
  const el = document.createElement('div');
  el.className = cls;
  el.style.left = `${x - view.x}px`;
  el.style.top = `${y - view.y}px`;
  el.style.width = `${w}px`;
  el.style.height = `${h}px`;
  canvas.append(el);
  return el;
}

function pin(kind) {
  if (!kind) return '';
  if (kind.startsWith('exec')) return `<svg><use href="#i-pin-${kind}"/></svg>`;
  if (kind === 'del') return '<svg class="dot-del"><use href="#i-pin-box"/></svg>';
  const ring = kind.endsWith('o');
  const type = ring ? kind.slice(0, -1) : kind;
  return `<svg class="dot-${type}"><use href="#i-pin-${ring ? 'ring' : 'dot'}"/></svg>`;
}

function control(value, label) {
  if (!value) return '';
  if (value === 'on' || value === 'off') return `<input type="checkbox" aria-label="${label}"${value === 'on' ? ' checked' : ''}>`;
  if (value === 'self' || value === '0') return `<input type="text" value="${value}" aria-label="${label || 'Index'}">`;
  return `<select class="${value.startsWith('Lock') ? 'long' : ''}" aria-label="Value"><option>${value}</option></select>`;
}

function row([inPin, label = '', outLabel = '', outPin = '', value = '', indent = '']) {
  const short = !inPin && !outPin && !label;
  const text = indent ? `<span>&emsp;&emsp;${indent}</span>` : `<span>${label}</span>`;
  return `<div class="row${short ? ' short' : ''}">${pin(inPin)}${text}${control(value, label)}<span class="gap"></span><span>${outLabel}</span>${pin(outPin)}</div>`;
}

function headIcon(kind) {
  if (kind.includes('set')) return '';
  if (kind.includes('sq')) return '<svg><use href="#i-square"/></svg>';
  if (/event|call|macro/.test(kind)) return '<svg><use href="#i-event"/></svg>';
  return '<svg><use href="#i-f"/></svg>';
}

comments.forEach(([x, y, w, h, text]) => {
  place('comment', x, y, w, h).innerHTML = `<div class="comment-head">${text}</div>`;
});

canvas.insertAdjacentHTML('beforeend', '<svg class="wires">' + wires.map(([kind, x1, y1, x2, y2]) => {
  const a = x1 - view.x, b = y1 - view.y, c = x2 - view.x, d = y2 - view.y;
  const bend = (c - a) / 3;
  return `<path stroke="${colors[kind]}" stroke-width="${kind === 'exec' ? 2 : 1.5}" d="M${a} ${b}C${a + bend} ${b} ${c - bend} ${d} ${c} ${d}"/>`;
}).join('') + '</svg>');

nodes.forEach(([x, y, w, h, kind, title, sub, rows, badge]) => {
  const el = place(`node ${kind}`, x, y, w, h);
  let html = '';
  if (title) {
    const mark = kind === 'event' && !badge ? '<svg class="mark"><use href="#i-pin-boxo"/></svg>' : '';
    html += `<div class="head">${headIcon(kind)}<span>${title}${sub ? `<small>${sub}</small>` : ''}</span>${mark}</div>`;
  }
  if (kind === 'get') html += '<strong>GET</strong>';
  html += rows.map(row).join('');
  if (badge) html += `<svg class="badge"><use href="#i-${badge}"/></svg>`;
  el.innerHTML = html;
});

bubbles.forEach(([x, y, w, h, text, size = '']) => {
  place(`bubble ${size}`, x, y, w, h).innerHTML = `<p>${text}</p>`;
});
```
